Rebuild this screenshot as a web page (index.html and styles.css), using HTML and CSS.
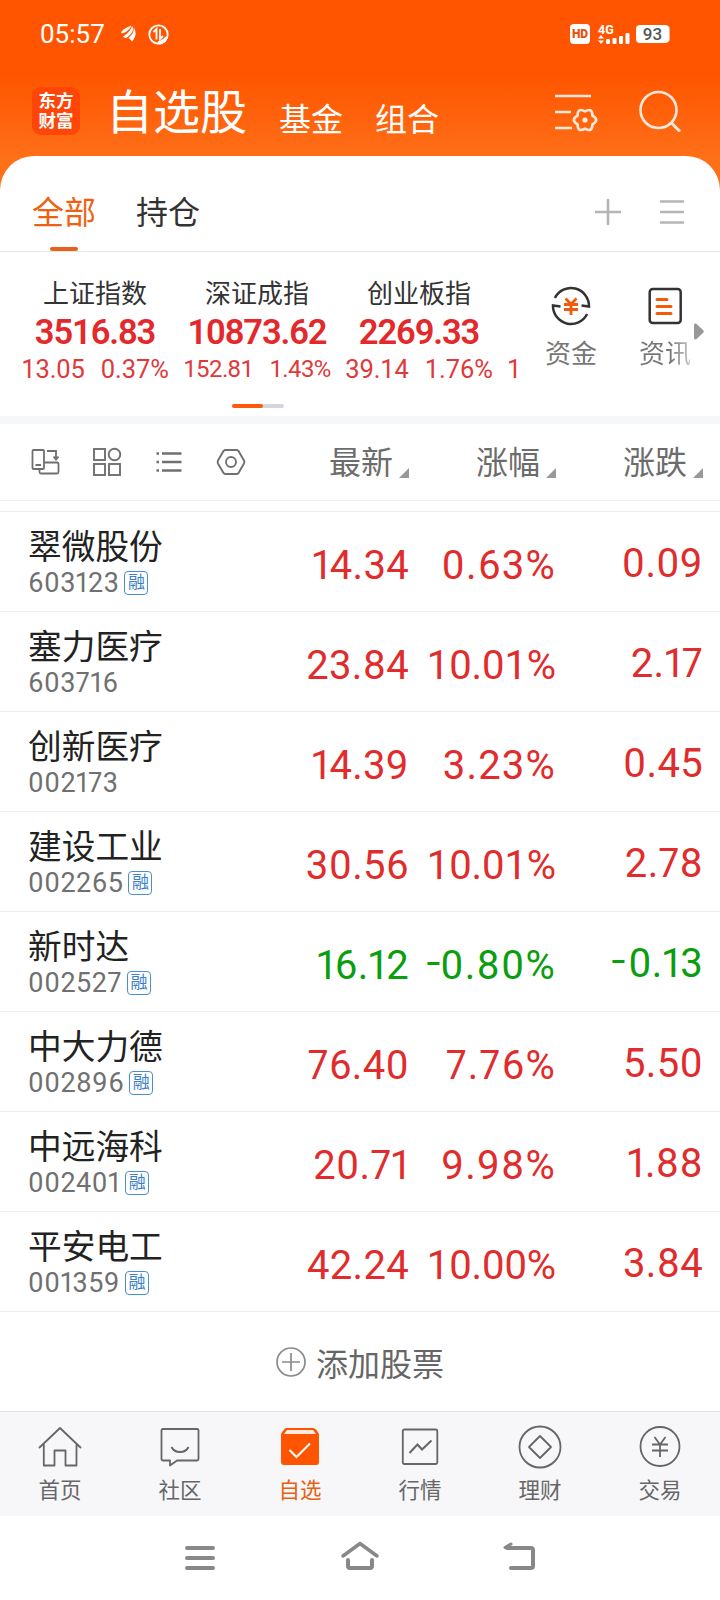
FILE: index.html
```html
<!DOCTYPE html>
<html lang="zh-CN">

<head>
    <meta charset="UTF-8">
    <meta name="viewport" content="width=device-width, initial-scale=1.0">
    <title>自选股</title>
    <link rel="stylesheet" href="styles.css">
</head>

<body>
    <header class="header">
        <div class="status-bar">
            <span class="time">05:57</span>
            <svg class="notify-icon" width="15" height="18" viewBox="0 0 16 18" fill="#fff">
                <path d="M0 7C3 3 7 2 11 0C10 4 6 7 1 8.500Z" />
                <path d="M2 12C6 9 10 6 12 0.500C15 6 9 11 5 13.500Z" />
                <path d="M8 13C12 10 14 7 13.500 2C17.500 8 15 13 12 17Z" />
            </svg>
            <svg class="data-icon" width="21" height="21" viewBox="0 0 21 21" fill="none" stroke="#fff" stroke-width="1.8">
                <circle cx="10.5" cy="10.5" r="9.2" />
                <path d="M5.5 8L8.5 5V15.5M12 5V15L15 12" />
                <path d="M11 18C14 17 17 15 18.5 13L17 17L12 19.5Z" fill="#fff" />
            </svg>
            <div class="status-right">
                <span class="hd">HD</span>
                <svg class="signal" width="32" height="21" viewBox="0 0 32 21" fill="#fff">
                    <text x="0" y="10" font-size="12.5" font-weight="700">4G</text>
                    <path d="M0 14.5L3 11L6 14.5ZM0 16.5L3 20L6 16.5Z" />
                    <rect x="8" y="15" width="4" height="5" rx="1" />
                    <rect x="14.5" y="14" width="4" height="6" rx="1" />
                    <rect x="21" y="12" width="4" height="8" rx="1" />
                    <rect x="27.5" y="9" width="4" height="11" rx="1" />
                </svg>
                <span class="battery">93</span>
            </div>
        </div>
        <div class="title-bar">
            <div class="logo">东方<br>财富</div>
            <h1>自选股</h1>
            <a class="top-link">基金</a>
            <a class="top-link">组合</a>
            <svg class="manage-icon" width="44" height="42" viewBox="0 0 44 42" fill="none" stroke="#ffe9dc" stroke-width="2.6">
                <path d="M1 6H37M1 22H17M1 38H18" />
                <path d="M38.4 25.7Q46 30 38.4 34.3Q38.5 43 31 38.6Q23.5 43 23.6 34.3Q16 30 23.6 25.7Q23.5 17 31 21.4Q38.5 17 38.4 25.7Z" stroke-linejoin="round" />
                <circle cx="31" cy="30" r="2.6" fill="#ffe9dc" stroke="none" />
            </svg>
            <svg class="search-icon" width="42" height="42" viewBox="0 0 42 42" fill="none" stroke="#ffe9dc" stroke-width="2.6">
                <circle cx="19.5" cy="20" r="18" />
                <path d="M32 32.5L41 41.5" stroke-width="3" />
            </svg>
        </div>
    </header>

    <main class="panel">
        <nav class="tabs">
            <a class="tab active">全部</a>
            <a class="tab">持仓</a>
            <svg class="add-icon" width="26" height="26" viewBox="0 0 26 26" stroke="#b5b5b5" stroke-width="2.6">
                <path d="M0 13H26M13 0V26" />
            </svg>
            <svg class="menu-icon" width="24" height="26" viewBox="0 0 24 26" stroke="#b5b5b5" stroke-width="2.6">
                <path d="M0 2.5H24M0 13H24M0 23.5H24" />
            </svg>
        </nav>

        <section class="market">
            <div class="index-strip">
                <div class="index">
                    <div class="index-name">上证指数</div>
                    <div class="index-value">3516.83</div>
                    <div class="index-change"><span>13.05</span><span>0.37%</span></div>
                </div>
                <div class="index">
                    <div class="index-name">深证成指</div>
                    <div class="index-value">10873.62</div>
                    <div class="index-change small"><span>152.81</span><span>1.43%</span></div>
                </div>
                <div class="index">
                    <div class="index-name">创业板指</div>
                    <div class="index-value">2269.33</div>
                    <div class="index-change"><span>39.14</span><span>1.76%</span></div>
                </div>
                <div class="index partial">
                    <div class="index-change">1</div>
                </div>
            </div>
            <a class="shortcut">
                <svg width="40" height="40" viewBox="0 0 40 40" fill="none" stroke="#333" stroke-width="2.5">
                    <path d="M3.9 12A18 18 0 0 1 38 20.5L30.5 19.5" />
                    <path d="M36.1 28A18 18 0 0 1 2 19.5L9.5 20.5" />
                    <path d="M14.5 12.5L20 18L25.5 12.5M13 18.5H27M13 23.5H27M20 18V29" stroke="#f35b0c" stroke-width="2.8" />
                </svg>
                <span>资金</span>
            </a>
            <a class="shortcut news">
                <svg width="40" height="40" viewBox="0 0 40 40" fill="none" stroke="#333" stroke-width="2.5">
                    <rect x="4.7" y="3" width="31" height="34" rx="3" />
                    <path d="M12 13.5H22M12 20.5H26M12 27.5H26" stroke="#f35b0c" stroke-width="3" stroke-linecap="round" />
                </svg>
                <span class="faded">资讯</span>
            </a>
            <svg class="more-arrow" width="10" height="17" viewBox="0 0 10 17" fill="#999">
                <path d="M0 2Q0 0 2 .5L9 7Q10.5 8.500 9 10L2 16.500Q0 17 0 15Z" />
            </svg>
            <div class="pager"><i></i></div>
        </section>

        <section class="list-head">
            <div class="tools">
                <svg width="30" height="30" viewBox="0 0 30 30" fill="none" stroke="#707070" stroke-width="1.8">
                    <rect x="2.5" y="3" width="11.5" height="19" rx="1" />
                    <path d="M5.5 18H11M17 4H26V11M23.5 9.5L26 12.5L28.5 9.5" />
                    <path d="M14 15.5H27Q28.5 15.5 28.5 17V25Q28.5 26.5 27 26.5H11Q9.5 26.5 9.5 25V22" />
                </svg>
                <svg width="30" height="30" viewBox="0 0 30 30" fill="none" stroke="#707070" stroke-width="1.9">
                    <rect x="2" y="2" width="11" height="11" />
                    <circle cx="22.5" cy="7.5" r="5.8" />
                    <rect x="2" y="17" width="11" height="11" />
                    <rect x="17" y="17" width="11" height="11" />
                </svg>
                <svg width="30" height="30" viewBox="0 0 30 30" fill="none" stroke="#707070" stroke-width="2.4">
                    <path d="M8 6.5H27.5M8 15H27.5M8 23.5H27.5M2.5 6.5H5M2.5 15H5M2.5 23.5H5" />
                </svg>
                <svg width="30" height="30" viewBox="0 0 30 30" fill="none" stroke="#707070" stroke-width="1.9">
                    <path d="M9 3H21L22.5 4L28 13.5Q28.8 15 28 16.5L22.5 26L21 27H9L7.5 26L2 16.5Q1.2 15 2 13.5L7.5 4Z" />
                    <circle cx="15" cy="15" r="5" />
                </svg>
            </div>
            <span class="sort">最新</span>
            <span class="sort">涨幅</span>
            <span class="sort">涨跌</span>
        </section>

        <section class="stock-list">
            <div class="stock up">
                <div class="stock-info">
                    <div class="stock-name">翠微股份</div>
                    <div class="stock-code">603123<span class="badge">融</span></div>
                </div>
                <span>14.34</span><span class="rate">0.63%</span><span class="diff">0.09</span>
            </div>
            <div class="stock up">
                <div class="stock-info">
                    <div class="stock-name">塞力医疗</div>
                    <div class="stock-code">603716</div>
                </div>
                <span>23.84</span><span class="rate long">10.01%</span><span class="diff">2.17</span>
            </div>
            <div class="stock up">
                <div class="stock-info">
                    <div class="stock-name">创新医疗</div>
                    <div class="stock-code">002173</div>
                </div>
                <span>14.39</span><span class="rate">3.23%</span><span class="diff">0.45</span>
            </div>
            <div class="stock up">
                <div class="stock-info">
                    <div class="stock-name">建设工业</div>
                    <div class="stock-code">002265<span class="badge">融</span></div>
                </div>
                <span>30.56</span><span class="rate long">10.01%</span><span class="diff">2.78</span>
            </div>
            <div class="stock down">
                <div class="stock-info">
                    <div class="stock-name">新时达</div>
                    <div class="stock-code">002527<span class="badge">融</span></div>
                </div>
                <span>16.12</span><span class="rate"><b class="minus">-</b>0.80%</span><span class="diff"><b class="minus">-</b>0.13</span>
            </div>
            <div class="stock up">
                <div class="stock-info">
                    <div class="stock-name">中大力德</div>
                    <div class="stock-code">002896<span class="badge">融</span></div>
                </div>
                <span>76.40</span><span class="rate">7.76%</span><span class="diff">5.50</span>
            </div>
            <div class="stock up">
                <div class="stock-info">
                    <div class="stock-name">中远海科</div>
                    <div class="stock-code">002401<span class="badge">融</span></div>
                </div>
                <span>20.71</span><span class="rate">9.98%</span><span class="diff">1.88</span>
            </div>
            <div class="stock up">
                <div class="stock-info">
                    <div class="stock-name">平安电工</div>
                    <div class="stock-code">001359<span class="badge">融</span></div>
                </div>
                <span>42.24</span><span class="rate long">10.00%</span><span class="diff">3.84</span>
            </div>
        </section>

        <a class="add-stock">
            <svg width="30" height="30" viewBox="0 0 30 30" fill="none" stroke="#8a8a8a" stroke-width="1.7">
                <circle cx="15" cy="15" r="14" />
                <path d="M6 15H24M15 6V24" />
            </svg>
            添加股票
        </a>
    </main>

    <nav class="tab-bar">
        <a>
            <svg width="44" height="44" viewBox="0 0 44 44" fill="none" stroke="#666" stroke-width="1.8" stroke-linejoin="round">
                <path d="M1 23L22 3L43 23M5.8 19V40.5H16.5V25.5H27.5V40.5H38.5V19" />
            </svg>
            首页
        </a>
        <a>
            <svg width="44" height="44" viewBox="0 0 44 44" fill="none" stroke="#666" stroke-width="1.8" stroke-linejoin="round">
                <path d="M5 4H39Q40.5 4 40.5 5.5V34Q40.5 35.5 39 35.5H19L12 40.5V35.5H5Q3.5 35.5 3.5 34V5.5Q3.5 4 5 4Z" />
                <path d="M13.5 22Q16 27 22 27Q28 27 30.5 22" stroke-width="2" />
            </svg>
            社区
        </a>
        <a class="current">
            <svg width="44" height="44" viewBox="0 0 44 44" fill="none">
                <path d="M8 3H35Q37 3 38 4.500L41 9V37Q41 40 38 40H6Q3 40 3 37V9L6 4.500Q7 3 8 3Z" fill="#ff5500" />
                <path d="M9 5H35L38 9H6Z" fill="#ffeadf" />
                <path d="M11.5 25L18.5 32L32 18.5" stroke="#fff" stroke-width="2" />
            </svg>
            自选
        </a>
        <a>
            <svg width="44" height="44" viewBox="0 0 44 44" fill="none" stroke="#666" stroke-width="1.8">
                <rect x="4.8" y="4.5" width="34.500" height="34.500" rx="1.500" />
                <path d="M11.5 28L19.5 19.5L24 24.5L33.5 15.5" stroke-width="2" />
            </svg>
            行情
        </a>
        <a>
            <svg width="44" height="44" viewBox="0 0 44 44" fill="none" stroke="#666" stroke-width="1.8">
                <circle cx="22" cy="22" r="20.5" />
                <path d="M22 11L33 22L22 33L11 22Z" stroke-linejoin="round" />
            </svg>
            理财
        </a>
        <a>
            <svg width="44" height="44" viewBox="0 0 44 44" fill="none" stroke="#666" stroke-width="1.8">
                <circle cx="22" cy="21.5" r="19.5" />
                <path d="M16.5 12L22 19.5L27.5 12M14 19.5H30M14 25.5H30M22 19.5V32" />
            </svg>
            交易
        </a>
    </nav>

    <div class="system-nav">
        <svg width="44" height="40" viewBox="0 0 44 40" fill="none" stroke="#888" stroke-width="4" stroke-linecap="round">
            <path d="M9 10H35M9 20H35M9 30H35" />
        </svg>
        <svg width="44" height="40" viewBox="0 0 44 40" fill="none" stroke="#888" stroke-width="4" stroke-linecap="round">
            <path d="M5 18L22 5.5L39 18" stroke-linejoin="round" stroke-width="3.5" />
            <path d="M10 22V28Q10 30 12 30H32Q34 30 34 28V22" />
        </svg>
        <svg width="44" height="40" viewBox="0 0 44 40" fill="none" stroke="#888" stroke-width="4" stroke-linecap="round">
            <path d="M8 10H32Q34 10 34 12V28Q34 30 32 30H12" transform="translate(1 0)" />
            <path d="M7 9.5L13 6" stroke-width="3" />
        </svg>
    </div>
</body>

</html>
```
FILE: styles.css
```css
* {
    box-sizing: border-box;
}

body {
    margin: 0;
    width: 720px;
    height: 1600px;
    overflow: hidden;
    background: #fff;
    font-family: Roboto, "Noto Sans CJK SC", sans-serif;
    color: #333;
}

svg {
    display: block;
    flex-shrink: 0;
}

.header {
    height: 196px;
    background: linear-gradient(#ff5500 75px, #ff7019 160px);
    color: #fff;
}

.status-bar {
    display: flex;
    align-items: center;
    height: 68px;
    padding: 0 49px 0 40px;
}

.time {
    width: 81px;
    font-size: 26px;
}

.data-icon {
    margin-left: 12px;
}

.status-right {
    display: flex;
    align-items: center;
    gap: 8px;
    margin-left: auto;
}

.hd {
    width: 20px;
    height: 20px;
    border-radius: 4px;
    background: #fff;
    color: #e8500a;
    font-size: 12px;
    font-weight: 900;
    line-height: 20px;
    text-align: center;
}

.signal {
    margin-right: -2px;
    overflow: visible;
}

.battery {
    width: 33px;
    height: 18px;
    margin-right: 2px;
    border-radius: 4px;
    background: #fff;
    box-shadow: 2px 0 0 -1px #ffb58c;
    color: #555;
    font-size: 17px;
    font-weight: 500;
    line-height: 19px;
    text-align: center;
}

.title-bar {
    display: flex;
    align-items: center;
    height: 88px;
    padding: 0 39px 2px 32px;
}

.logo {
    width: 48px;
    height: 48px;
    padding-top: 4px;
    border-radius: 9px;
    background: #ff4508;
    font-size: 17.5px;
    font-weight: 700;
    line-height: 20px;
    text-align: center;
}

h1 {
    margin: 4px 0 0 26px;
    font-size: 47px;
    font-weight: 400;
    line-height: 60px;
}

.top-link {
    margin: 18px 0 0 32px;
    font-size: 32px;
    line-height: 40px;
}

.manage-icon {
    margin-left: auto;
}

.search-icon {
    margin-left: 41px;
}

.panel {
    position: relative;
    margin-top: -40px;
    border-radius: 34px 34px 0 0;
    background: #fff;
}

.tabs {
    display: flex;
    align-items: center;
    height: 96px;
    padding: 0 36px 0 32px;
    border-bottom: 1px solid #e6e6e6;
}

.tab {
    position: relative;
    margin-right: 40px;
    padding-top: 20px;
    font-size: 32px;
    line-height: 75px;
}

.tab.active {
    color: #f06010;
}

.tab.active::after {
    content: "";
    position: absolute;
    left: 18px;
    bottom: 0;
    width: 28px;
    height: 4px;
    border-radius: 2px;
    background: #e8601c;
}

.add-icon {
    margin: 16px 0 0 auto;
}

.menu-icon {
    margin: 16px 0 0 39px;
}

.market {
    position: relative;
    display: flex;
    height: 172px;
    border-bottom: 8px solid #f6f7f9;
}

.index-strip {
    display: flex;
    width: 524px;
    padding: 24px 0 0 14px;
    overflow: hidden;
}

.index {
    flex: 0 0 162px;
    text-align: center;
    white-space: nowrap;
}

.index-name {
    font-size: 26px;
    line-height: 36px;
}

.index-value {
    color: #e3292b;
    font-size: 34.5px;
    font-weight: 600;
    line-height: 40px;
    letter-spacing: -1.1px;
}

.index-change {
    display: flex;
    justify-content: center;
    gap: 16px;
    margin-top: 1px;
    color: #e0393b;
    font-size: 25.5px;
    line-height: 32px;
    letter-spacing: -0.1px;
}

.index-change.small {
    font-size: 24px;
    letter-spacing: -0.6px;
}

.index.partial {
    padding: 76px 0 0 7px;
}

.partial .index-change {
    justify-content: flex-start;
}

.shortcut {
    display: flex;
    flex-direction: column;
    align-items: center;
    width: 94px;
    padding-top: 34px;
    color: #777;
    font-size: 26px;
    line-height: 36px;
}

.shortcut span {
    margin-top: 10px;
}

.faded {
    background: linear-gradient(90deg, #777 60%, #ccc);
    background-clip: text;
    -webkit-background-clip: text;
    color: transparent;
}

.more-arrow {
    margin: 71px 0 0 -18px;
}

.pager {
    position: absolute;
    left: 232px;
    bottom: 8px;
    width: 52px;
    height: 4px;
    border-radius: 2px;
    background: #d4d6de;
}

.pager i {
    display: block;
    width: 31px;
    height: 4px;
    border-radius: 2px;
    background: #ff5a0a;
}

.list-head,
.stock {
    display: grid;
    grid-template-columns: 1fr 147px 147px 147px;
    padding: 0 17px 0 28px;
}

.list-head {
    align-items: center;
    height: 77px;
    border-bottom: 1px solid #ececec;
}

.tools {
    display: flex;
    gap: 32px;
    width: 234px;
    padding-left: 2px;
}

.sort {
    display: flex;
    justify-content: flex-end;
    align-items: center;
    gap: 6px;
    padding-top: 2px;
    color: #6c6c6c;
    font-size: 32px;
    line-height: 40px;
}

.sort::after {
    content: "";
    margin-top: 20px;
    border-bottom: 10px solid #999;
    border-left: 10px solid transparent;
}

.stock-list {
    margin-top: 10px;
    border-top: 1px solid #ececec;
}

.stock {
    height: 100px;
    padding-right: 17px;
    border-bottom: 1px solid #ececec;
    font-size: 40px;
    line-height: 107px;
    text-align: right;
    letter-spacing: 0.3px;
    font-variant-numeric: proportional-nums;
}

.stock.up {
    color: #e02c2c;
}

.stock.down {
    color: #0a9e0f;
}

.rate {
    letter-spacing: 1.2px;
}

.rate.long {
    letter-spacing: -0.1px;
    font-variant-numeric: tabular-nums;
}

.diff {
    line-height: 103px;
}

/* the hyphen sits low and narrow next to the digits */
.minus {
    display: inline-block;
    font-weight: 400;
    transform: translateY(-3px) scaleX(1.25);
}

.diff .minus {
    margin-right: 4px;
}

.stock-info {
    text-align: left;
    white-space: nowrap;
    letter-spacing: 0;
}

.stock-name {
    padding-top: 15px;
    color: #222;
    font-size: 33.7px;
    line-height: 42px;
}

.stock-code {
    display: flex;
    align-items: center;
    height: 28px;
    color: #707070;
    font-size: 27px;
    line-height: 28px;
    letter-spacing: 0.5px;
}

.badge {
    width: 24px;
    height: 24px;
    margin: -1px 0 0 5px;
    border: 1px solid #4a8fd0;
    border-radius: 4px;
    color: #3a80c8;
    font-size: 17px;
    line-height: 21px;
    text-align: center;
    letter-spacing: 0;
}

.add-stock {
    display: flex;
    justify-content: center;
    align-items: center;
    gap: 10px;
    height: 99px;
    color: #666;
    font-size: 32px;
}

.tab-bar {
    display: flex;
    height: 105px;
    border-top: 1px solid #e2e2e4;
    background: #f7f7fa;
}

.tab-bar a {
    display: flex;
    flex: 1;
    flex-direction: column;
    align-items: center;
    gap: 6px;
    padding-top: 13px;
    color: #666;
    font-size: 21.5px;
    line-height: 32px;
}

.tab-bar .current {
    color: #e8600f;
}

.system-nav {
    display: flex;
    justify-content: center;
    gap: 116px;
    padding-top: 22px;
}
```
